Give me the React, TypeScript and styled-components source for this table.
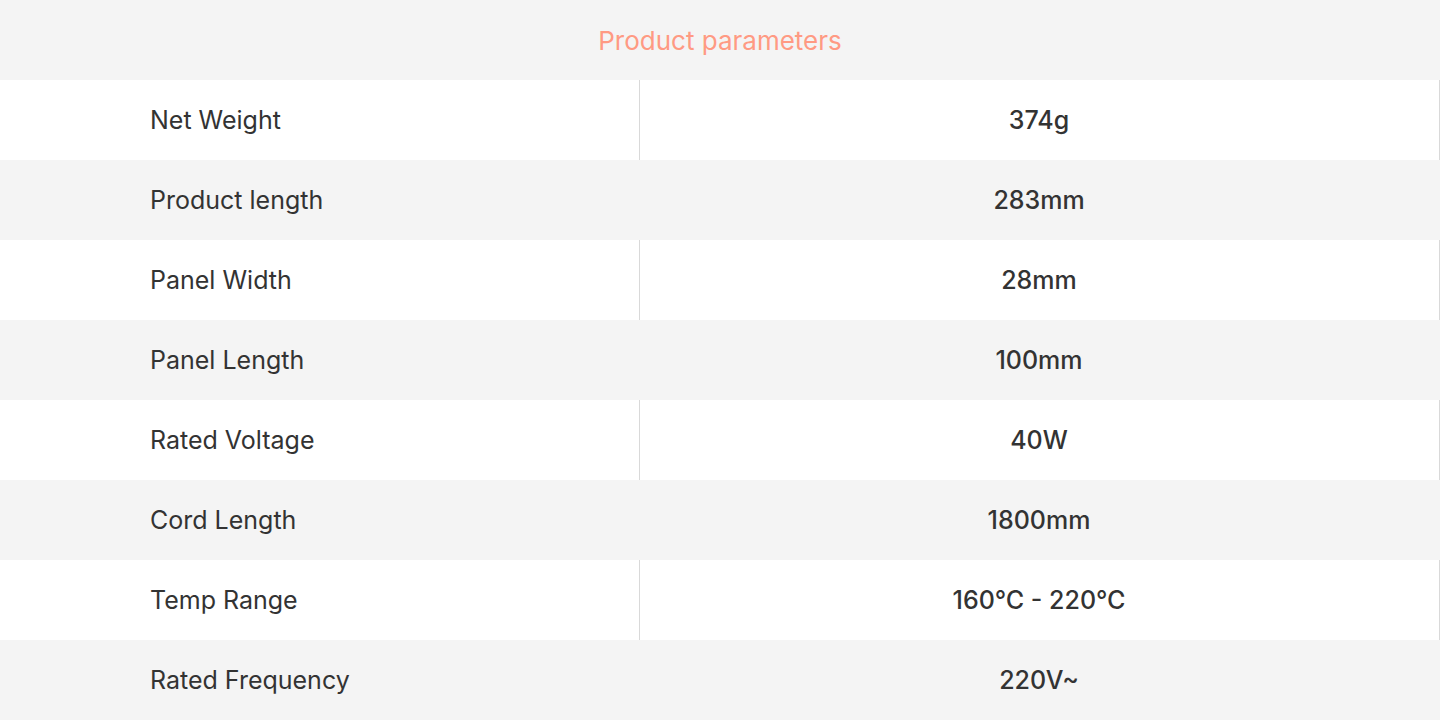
import React from 'react';
import styled, {createGlobalStyle} from "styled-components";

const GlobalStyle = createGlobalStyle`
  html, body {
    margin: 0;
    padding: 0;
    background: #ffffff;
  }
  body {
    font-family: Inter, "Noto Sans", sans-serif;
  }
`

type RowProps = {
    shaded: boolean
}

const Table = styled.div`
  width: 1440px;
  display: flex;
  flex-direction: column;
`
const Header = styled.div`
  height: 80px;
  background-color: #f4f4f4;
  display: flex;
  align-items: center;
  justify-content: center;
  color: #ff9a83;
  font-size: 26px;
  font-weight: 400;
`
const Row = styled.div<RowProps>`
  height: 80px;
  display: grid;
  grid-template-columns: 640px 800px;
  background-color: ${props => props.shaded ? '#f4f4f4' : '#ffffff'};
  color: #333333;
  font-size: 25px;
`
const Label = styled.div<RowProps>`
  display: flex;
  align-items: center;
  padding-left: 150px;
  border-right: 1px solid ${props => props.shaded ? '#f4f4f4' : '#d9d9d9'};
`
const Value = styled.div<RowProps>`
  display: flex;
  align-items: center;
  justify-content: center;
  font-weight: 500;
  padding-right: 1px;
  border-right: 1px solid ${props => props.shaded ? '#f4f4f4' : '#d9d9d9'};
`

const params = [
    ['Net Weight', '374g'],
    ['Product length', '283mm'],
    ['Panel Width', '28mm'],
    ['Panel Length', '100mm'],
    ['Rated Voltage', '40W'],
    ['Cord Length', '1800mm'],
    ['Temp Range', '160℃ - 220℃'],
    ['Rated Frequency', '220V~'],
]

const App = () => {
    return (
        <>
            <GlobalStyle/>
            <Table>
                <Header>Product parameters</Header>
                {params.map(([label, value], i) => (
                    <Row key={label} shaded={i % 2 === 1}>
                        <Label shaded={i % 2 === 1}>{label}</Label>
                        <Value shaded={i % 2 === 1}>{value}</Value>
                    </Row>
                ))}
            </Table>
        </>
    );
};

export default App;
